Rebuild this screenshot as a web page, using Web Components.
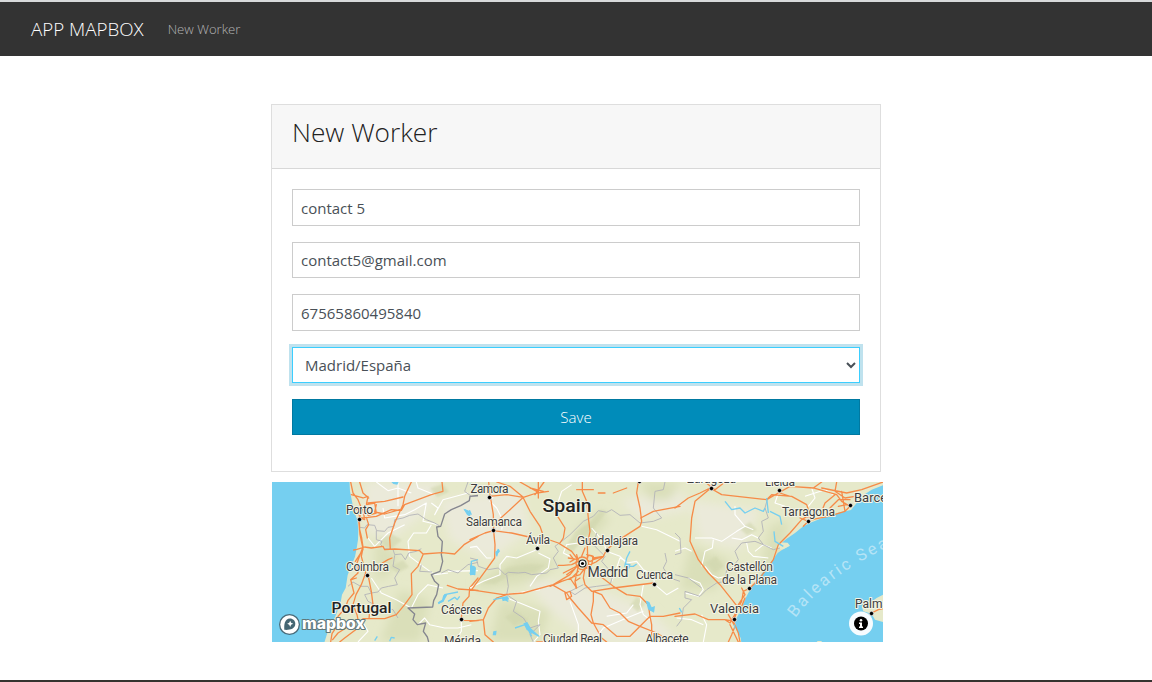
<!DOCTYPE html>
<html lang="en">
<head>
<meta charset="utf-8">
<title>App Mapbox</title>
<style>
html,body{margin:0;height:100%;overflow:hidden;background:#fff}
body{font-family:"Open Sans",sans-serif;font-size:15px;line-height:1.5;color:#222}
</style>
</head>
<body>
<worker-app></worker-app>
<script>
const define=(name,html,init)=>customElements.define(name,class extends HTMLElement{
  constructor(){
    super();
    const t=document.createElement('template');
    t.innerHTML=html;
    this.attachShadow({mode:'open'}).append(t.content.cloneNode(true));
  }
  connectedCallback(){ if(init) init(this,this.shadowRoot); }
});

define('app-navbar',`<style>
:host{display:flex;align-items:center;box-sizing:border-box;height:56px;padding:0 31px;background:#333;border-top:2px solid #d8dadb;gap:24px;flex:none}
.brand{font-weight:300;font-size:18.75px;color:#fff;white-space:nowrap}
::slotted(a){font-weight:300;font-size:13.125px;color:#b4b4b4;text-decoration:none;padding-top:1px}
</style><span class="brand"><slot name="brand"></slot></span><slot></slot>`);

define('worker-card',`<style>
:host{display:block;box-sizing:border-box;border:1px solid #dedede;background:#fff;height:368px}
header{box-sizing:border-box;height:64px;padding:12px 20px;background:#f7f7f7;border-bottom:1px solid #d8d8d8}
h1{margin:0;font-size:26.25px;font-weight:300;line-height:31px;color:#222}
.body{display:flex;flex-direction:column;gap:16px;padding:20px}
</style><header><h1><slot name="title"></slot></h1></header><div class="body"><slot></slot></div>`);

define('text-field',`<style>
:host{display:block;height:36.5px}
input{display:block;box-sizing:border-box;width:100%;height:36.5px;padding:6.5px 8px 5.5px;border:1px solid #ccc;border-radius:0;background:#fff;color:#495057;font:400 15px/22.5px "Open Sans",sans-serif;outline:0}
</style><input type="text">`,(h,r)=>{r.querySelector('input').value=h.getAttribute('value');});

define('place-select',`<style>
:host{display:block;height:36.5px}
select{display:block;box-sizing:border-box;width:100%;height:36.5px;padding:6px 8px;border:1px solid #3bceff;border-radius:0;background:#fff;color:#495057;font:400 15px/22.5px "Open Sans",sans-serif;outline:0;box-shadow:0 0 0 3px rgba(0,140,186,.25)}
</style><select><option>Madrid/España</option></select>`);

define('save-button',`<style>
:host{display:block;height:36px}
button{display:block;box-sizing:border-box;width:100%;height:36px;padding:6px;border:1px solid #0079a1;background:#008cba;color:#fff;font:300 15px/22.5px "Open Sans",sans-serif}
</style><button><slot></slot></button>`);

define('spain-map',`<style>
:host{display:block;width:611px;height:160px}
svg{display:block;width:611px;height:160px}
.m{fill:none;stroke:#f68b48;stroke-width:3.9;stroke-linejoin:round;stroke-linecap:round}
.w{fill:none;stroke:#fff;stroke-width:3.300;stroke-linejoin:round}
.b{fill:none;stroke:#b3b3b8;stroke-width:2.700;stroke-linejoin:round}
.n{fill:none;stroke:#85868f;stroke-width:4;stroke-linejoin:round}
.r{fill:none;stroke:#75cff0;stroke-width:4;stroke-linejoin:round}
.g{fill:#dadfb9;stroke:none}
.s{fill:#ebeada;stroke:none}
.t text{font-family:Roboto,sans-serif;font-size:12px;fill:#3d3d40;stroke:#f4f4e6;stroke-width:2px;paint-order:stroke;stroke-linejoin:round}
.t .c{font-size:14px}
.t .k{font-size:18.5px;font-weight:500;fill:#222}
</style>
<svg viewBox="272 482 611 160">
<defs>
<filter id="soft"><feGaussianBlur stdDeviation="5"/></filter>
<filter id="hill"><feGaussianBlur stdDeviation="1"/></filter>
<path id="sea" d="M795.500 618Q829 572 900 542"/>
</defs>
<rect x="272" y="482" width="611" height="160" fill="#e6e9ca"/>
<g filter="url(#soft)">
<path class="s" d="M365 482L440 482 430 510 390 540 365 530ZM440 500L520 490 530 530 490 560 450 540ZM520 575L600 590 650 610 680 642 590 642 550 610ZM690 500L760 510 740 550 700 540ZM620 500L680 490 690 510 640 520Z"/>
<path class="g" d="M375 540L400 555 390 575 375 580ZM475 582L520 555 560 560 540 580 480 590ZM575 530L600 510 610 520 590 540ZM690 545L730 560 715 590 680 590ZM500 600L550 610 540 642 490 642ZM400 590L430 600 420 642 380 642ZM770 525L790 520 780 560 760 570ZM640 482L680 482 670 500 650 500Z"/>
</g>
<g fill="#d0d6ad" opacity=".6" filter="url(#hill)">
<path d="M480 583L497 576 508 567 530 564 545 565 535 573 510 575 495 584ZM565 548L575 532 590 522 600 510 607 511 593 530 580 542 573 552ZM380 538L392 534 402 540 391 549 384 546ZM390 567L403 560 409 567 397 573ZM505 617L515 610 529 620 514 626ZM705 563L716 556 724 566 715 573ZM740 529L750 522 757 530 747 535ZM630 605L637 597 645 604 638 612ZM430 488L443 484 449 492 437 497Z"/>
</g>
<g transform="translate(268 478) scale(.33333)">
<path fill="#75cff0" d="M0 0L244 0 246 40 254 80 260 105 268 125 271 155 270 185 266 211 261 236 250 263 239 291 233 330 222 350 217 379 201 418 186 441 178 465 167 500 0 500Z"/>
<path class="w" d="M325 12L360 38 390 30 430 45M345 90L350 120 410 110 440 95 475 75 465 130 510 140M490 140L475 165 437 165 420 190 425 235 465 265 500 290 540 285M490 75L510 90 500 110 525 65 600 45M310 300L340 345 385 365 430 390M430 390L450 350 480 320 525 330M450 440L470 420 485 440 530 450 570 450 610 440M390 12L390 85M540 280L630 278M300 180L320 205 360 165 410 140M580 420L580 460 560 492M280 425L300 460 270 492M445 12L450 30 500 50"/>
<path class="b" d="M276 148L290 150 297 140 320 142 326 158 350 160 360 148 378 145 380 125 405 120 425 112 450 108 475 125 500 135 517 145M325 158L325 185 342 190 338 200 350 212 375 214 380 230 400 228 412 245 422 225 445 220 460 212M380 232L375 265 395 275 380 300 388 320 362 325 340 330 330 342 310 345 300 325 278 325 255 312 240 325M312 345L290 350 300 370 330 385 375 395 390 420M600 12L590 40 610 55 630 55M460 260L455 280 492 282M520 285L540 275 570 285 600 260 630 253"/>
<path class="n" d="M630 52L606 55 604 68 578 83 550 95 530 108 518 145 506 147 510 175 523 190 520 230 524 250 516 280 490 290 500 310 512 320 506 350 497 368 494 387 420 390 440 408 435 425 448 440 473 435 466 460 478 477 482 492"/>
<path class="m" d="M248 12L255 45 270 65 280 90 274 125 275 155 281 180 285 207 280 220 267 255 270 285 248 305 258 345 240 367 232 390 210 415 210 440 192 467 188 492M285 210L280 235 293 285 280 320 264 350 255 380 267 410 270 425 234 450 210 465 194 485M302 300L310 340 315 380 305 400 303 422M257 216L267 214 290 207 310 210 345 205 350 215 380 213 455 218 465 228 522 224 560 228 588 200 630 175M465 230L450 265 430 287 432 350 410 380 385 410 350 422 285 422 270 450 230 480 215 492M522 12L525 40 490 50 410 80 400 97 370 95 325 115 300 118 275 120M430 12L410 55 405 80 380 135 365 180 367 214M300 75L350 70 405 57M250 50L285 60 300 55 295 80 320 75 325 105 300 112 290 85 270 90 275 120 290 125 285 95 263 95M325 80L320 102 350 108 395 95M295 118L302 140 293 155 298 180M275 12L285 45 302 60M538 322L570 333 630 337M630 300L605 330 603 355 585 375 580 420 585 427 630 428M343 255L360 245 372 240M250 305L265 300M272 125L276 170 284 207M262 250L285 215"/>
<path class="r" d="M590 95L600 103 605 98 610 110M630 245L610 250 610 270 622 270 620 290 605 285M510 375L525 370 530 350 570 342M540 370L560 358 568 365 575 355M365 490L370 478 380 480M320 488L328 475"/>
<path fill="#75cff0" d="M586 92L600 97 608 105 606 116 597 110ZM605 262L622 266 621 290 607 286 612 274ZM370 12H392L388 20 376 18ZM510 373L522 365 526 352 538 350 528 368 512 379Z"/>
</g>
<g transform="translate(470 478) scale(.33333)">
<path class="w" d="M0 208L20 205 50 240 64 240M205 190L200 215 140 240 110 235 90 260 90 290 40 310 0 330M205 225L240 242 235 270 200 295 180 325M70 55L60 70 80 90 100 130 95 155M305 20L275 40 265 70 263 115M300 235L280 225 290 200 325 195M365 150L400 190 410 220 450 235 470 255 500 250 520 275 550 290 553 315M515 145L560 155 600 175 630 190M520 320L510 380 520 410 540 425M490 380L470 405 410 415M110 360L150 375 210 400 205 430 210 470 190 492M300 370L325 440 325 492M110 350L170 340 210 335M555 320L590 350 625 330M470 250L450 240 440 270 425 310M370 490L400 450 470 420 520 400"/>
<path class="b" d="M0 240L20 245 25 265 55 275 85 270 105 290 115 283 145 285 165 283 185 290 230 285 240 275 265 270 250 240 265 220 255 205 275 190 300 170 340 130 370 115 385 98 410 103 425 95 450 112 480 110 510 135 550 130 575 120 550 90 555 40 580 35 585 12M110 290L115 325 110 350 140 370 130 400 160 420 180 450 210 440 180 470 190 492M380 165L370 200 405 235 395 250 430 290 420 320 380 325 345 330 315 350 300 340 340 320M585 225L590 250 580 270 600 300 630 310"/>
<path class="m" d="M56 12L60 50 70 110 71 160 75 200 74 240 45 280 5 335M58 55L110 50 160 58 200 45 235 40M80 12L120 25 160 58 120 95 70 140M150 12L200 40M160 60L180 100 210 145 222 180 265 195 305 220 320 240M0 185L45 165 70 158 125 165 190 180 220 190M205 12L205 60M222 12L195 50M180 30L220 40M337 12L337 40 350 70 355 120 360 160 352 200 353 240M370 35L350 35 320 35M385 45L405 45M430 45L470 30M505 12L500 45 510 90 515 130 510 145 440 190 410 215 400 235 370 240M512 120L550 100 630 85M263 115L285 150 280 180 270 195M0 335L100 350 160 345 250 320 300 290 325 260M0 430L40 425 55 390 80 360 110 350M320 230L325 250 305 260 280 262 265 262M325 245L295 240M330 260L280 285M325 280L305 300 275 310 240 325M350 230L370 235 365 260 345 270 330 290 300 300 320 330 315 310 330 300M345 270L340 300 345 320 365 340 430 330 550 315M350 270L385 290 430 325 470 350 510 355 535 380 540 415 580 415 630 405M250 322L290 345 300 360 325 390 365 435 400 440 440 475 480 475 510 445 540 415M370 340L370 370 363 410 370 435 395 480 410 492M370 340L395 350 420 390 450 405 475 430 510 445 560 465 600 490M540 415L545 440 545 492M40 425L45 470 70 492M200 492L290 492M325 265L315 310 318 330M285 345L300 340 305 355 290 365 285 345M370 245L400 235M335 235L345 210M300 230L312 245 300 252M310 275L290 290M355 262L378 252 400 236"/>
<circle class="m" cx="337" cy="256" r="19"/><circle class="m" cx="360" cy="241" r="9"/>
<path class="r" d="M15 15L28 30M85 213L80 235M70 365L95 360 115 370M135 450L165 440 180 460 208 475M70 465L78 468M480 220L470 240 465 265 490 265 500 258M530 370L540 395 552 400M165 435L185 475M0 20L5 15"/>
<path fill="#75cff0" d="M0 262L14 264 10 278 16 290 0 292ZM160 436L172 432 182 450 208 474 190 466 170 456ZM528 368L538 372 545 388 555 384 552 404 534 394ZM70 460L80 458 78 472 68 472ZM464 256L482 258 478 272 464 268ZM95 358L112 354 118 364 98 370ZM76 222L86 212 90 220 78 234Z"/>
</g>
<g transform="translate(675 478) scale(.33333)">
<path fill="#75cff0" d="M640 15L590 35 560 55 545 75 528 96 495 103 455 115 410 133 385 145 360 165 335 182 313 200 343 203 325 213 308 225 290 250 270 275 248 303 228 330 212 360 202 385 190 410 180 430 184 455 197 480 200 500 640 500Z"/>
<path fill="#e6e9ca" d="M312 193L338 194 345 203 325 214 306 214ZM625 350L605 360 580 378 560 385 565 400 590 407 600 425 625 432ZM425 489L440 489 440 492 428 492Z"/>
<path class="w" d="M60 180L110 180 140 190 185 160 210 145 235 155M180 85L180 110 210 145M115 185L112 210 90 220 80 265M0 220L30 210 50 220M215 195L220 220 235 235 280 240M40 300L75 315 85 335 70 355 30 345M170 180L200 185 230 170 250 180M310 45L300 75 330 85M410 30L420 60 400 85M290 210L265 200 240 220M90 265L110 290 130 300 155 295M390 55L450 35 475 50M80 410L95 440 85 492M5 420L50 425 85 440"/>
<path class="b" d="M278 60L270 90 280 120 260 130 265 160 250 180 265 200 240 190 200 195 180 220 190 245 170 270 155 275 150 310 125 315 95 335 75 355 30 340 30 360 50 365 25 390 20 425 5 445M0 165L15 180 18 225 0 230M0 290L40 300 80 330M265 200L295 215 315 210"/>
<path class="m" d="M0 90L40 60 75 45 105 30 140 50 275 65 310 45 345 25 415 30 440 12M105 32L60 70 50 120 45 190 70 245 100 285 135 320 175 370 190 390 175 430 190 465 195 492M90 12L120 35 150 12M275 65L290 50 350 55 395 80 405 110 380 125 345 165 310 200 295 245 255 300 225 330 205 340 200 370 185 400 165 435 150 425M315 45L345 55M415 30L485 50 500 70 525 85 510 100 460 115 410 125M440 30L515 45 560 35 624 12M485 12L480 40 510 60 540 55M465 90L490 65 525 65M440 100L450 75 480 50M415 125L385 110M375 120L400 130 385 145M0 415L60 408 100 425 150 425 180 430M160 410L180 445 170 470 160 492M190 380L210 350 200 330M200 385L210 360M165 440L190 492M500 40L510 100M490 85L515 80M590 405L610 395 624 392"/>
<path class="r" d="M150 70L170 95 195 90 210 105 240 90 265 100 270 90M275 60L280 105M285 100L315 115 320 140M297 160L300 190 325 205M13 390L20 403M178 440L180 452"/>
</g>
<g class="t">
<text x="346" y="514" textLength="27">Porto</text><text x="346" y="570.5" textLength="43">Coimbra</text>
<text x="470.500" y="492.500" textLength="38">Zamora</text><text x="466" y="525.500" textLength="56">Salamanca</text>
<text x="526" y="544" textLength="24">Ávila</text><text x="577" y="545" textLength="61">Guadalajara</text>
<text x="636" y="579" textLength="37">Cuenca</text><text class="c" x="587.500" y="577" textLength="41">Madrid</text>
<text x="441" y="614" textLength="41">Cáceres</text><text x="444" y="645" textLength="37">Mérida</text>
<text x="543" y="642.500" textLength="59">Ciudad Real</text><text x="645.500" y="642.500" textLength="43">Albacete</text>
<text x="687" y="483" textLength="49">Zaragoza</text><text x="765" y="486" textLength="30">Lleida</text>
<text x="782" y="516" textLength="53">Tarragona</text><text class="c" style="font-size:13px" x="854" y="502">Barcelona</text>
<text x="726" y="571" textLength="47">Castellón</text><text x="722" y="584" textLength="55">de la Plana</text>
<text class="c" style="font-size:13px" x="710" y="613" textLength="49">Valencia</text><text x="855" y="608">Palma</text>
<text class="k" x="542.500" y="512" textLength="49" lengthAdjust="spacingAndGlyphs">Spain</text>
<text class="k" style="font-size:15px" x="331.500" y="612.500" textLength="60" lengthAdjust="spacingAndGlyphs">Portugal</text>
</g>
<text font-family="Roboto,sans-serif" font-size="16.5" letter-spacing="2.500" fill="#b5e4f6"><textPath href="#sea">Balearic Sea</textPath></text>
<g stroke="#fff" stroke-width=".7">
<circle cx="359.500" cy="519.500" r="2.200"/><circle cx="367.500" cy="575.500" r="2.200"/><circle cx="489.500" cy="497.500" r="2.200"/><circle cx="493.500" cy="530.500" r="2.200"/><circle cx="537.500" cy="548.500" r="2.200"/><circle cx="607.500" cy="550.500" r="2.200"/><circle cx="654.500" cy="584.500" r="2.200"/><circle cx="461.500" cy="619.500" r="2.200"/><circle cx="639.500" cy="481.500" r="2.200"/><circle cx="711.500" cy="488.500" r="2.200"/><circle cx="779.500" cy="490.500" r="2.200"/><circle cx="808.500" cy="521.500" r="2.200"/><circle cx="850.500" cy="505.500" r="2.200"/><circle cx="749.500" cy="588.500" r="2.200"/><circle cx="734.500" cy="619.500" r="2.200"/><circle cx="871.500" cy="613.500" r="2.200"/></g>
<circle cx="582.500" cy="563.500" r="3.500" fill="#fff" stroke="#222" stroke-width="1.200"/><circle cx="582.500" cy="563.500" r="1.600"/>
<g>
<circle cx="289.500" cy="624.500" r="10.500" fill="#4a6a78"/>
<circle cx="289.500" cy="624.500" r="9.200" fill="#fff"/>
<path fill="#456673" d="M284.300 629.800C284 625.500 284.300 618.500 290 618.500C293 618.500 295.300 620.800 295.300 623.800C295.300 629.500 288.500 630.200 284.300 629.800Z"/>
<path fill="#fff" d="M290.200 620.800L291.100 622.800 293.200 623.800 291.100 624.800 290.200 626.900 289.200 624.800 287.200 623.800 289.200 622.800Z"/>
<text x="302" y="629" textLength="63" lengthAdjust="spacingAndGlyphs" font-family="Inter,sans-serif" font-weight="800" font-size="15" fill="#fff" stroke="#60777a" stroke-width="2" paint-order="stroke" stroke-linejoin="round">mapbox</text>
</g>
<circle cx="861" cy="623.500" r="12" fill="#fff" fill-opacity=".94"/>
<circle cx="861" cy="623.500" r="7"/>
<circle cx="861" cy="620.200" r="1.250" fill="#fff"/><path fill="#fff" d="M859 622.500H862V626.500H863V628H859V626.500H860V624H859Z"/>
</svg>`);

define('worker-app',`<style>
:host{display:flex;flex-direction:column;height:100vh;box-sizing:border-box;border-bottom:2px solid #35332f}
main{display:flex;flex-direction:column;gap:10px;width:610px;margin:48px auto 0}
spain-map{margin-left:1px}
</style>
<app-navbar><span slot="brand">APP MAPBOX</span><a href="#">New Worker</a></app-navbar>
<main>
<worker-card><span slot="title">New Worker</span>
<text-field value="contact 5"></text-field><text-field value="contact5@gmail.com"></text-field><text-field value="67565860495840"></text-field>
<place-select></place-select><save-button>Save</save-button></worker-card>
<spain-map></spain-map>
</main>`);
</script>
</body>
</html>
